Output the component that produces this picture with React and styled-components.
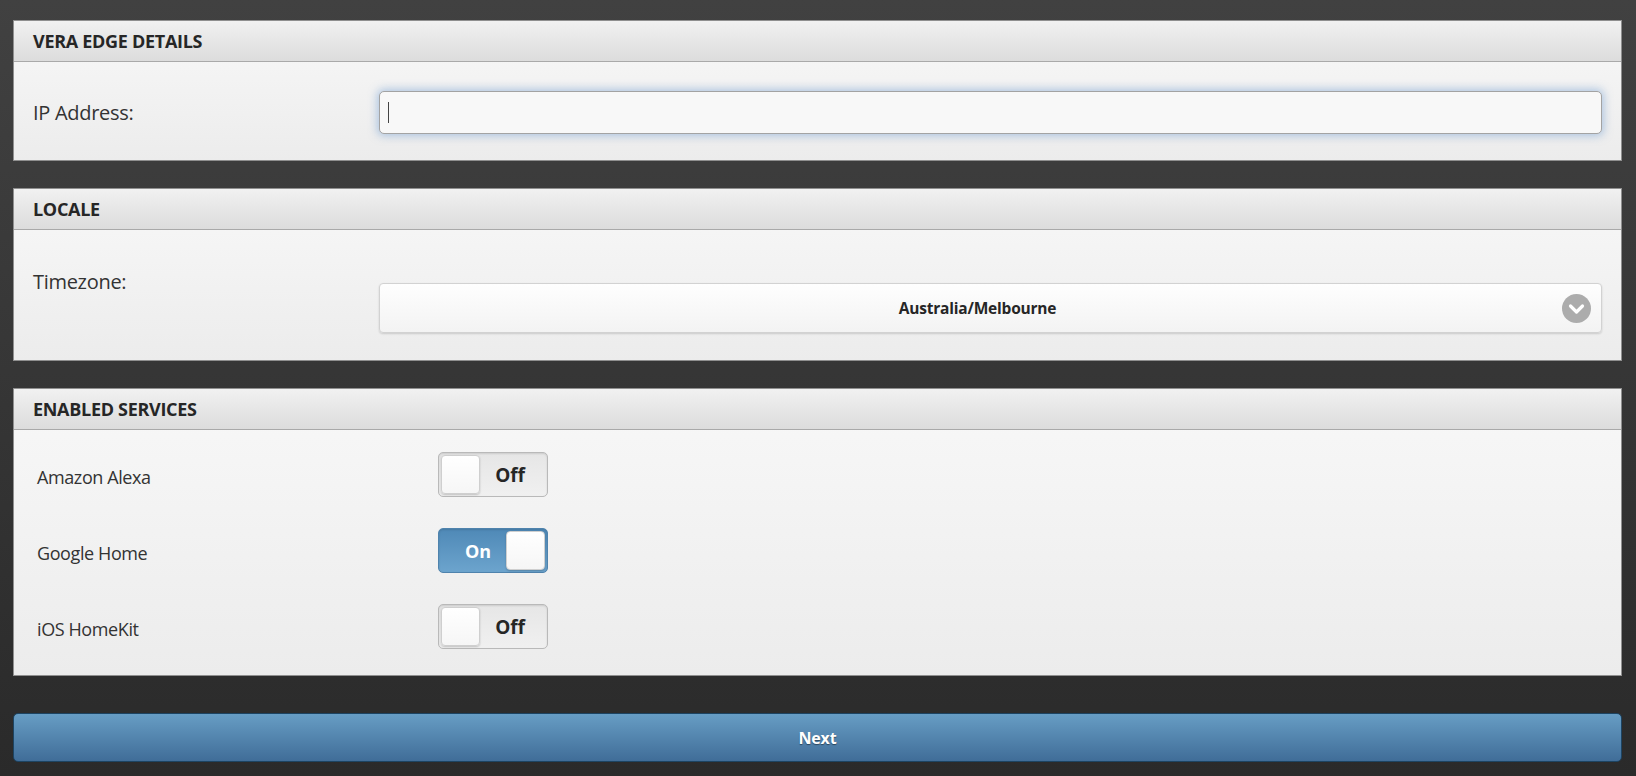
import React from "react";
import styled, { createGlobalStyle } from "styled-components";

const GlobalStyle = createGlobalStyle`
  html, body { margin: 0; padding: 0; }
  body { font-family: "Open Sans", "Liberation Sans", sans-serif; }
  * { box-sizing: border-box; }
`;

const Page = styled.div`
  min-height: 776px;
  background: linear-gradient(#414141, #2a2a2a);
  padding: 20px 14px 14px 13px;
  display: flex;
  flex-direction: column;
`;

const Panel = styled.section`
  border: 1px solid #8f8f8f;
  background: linear-gradient(#f8f8f8, #ececec);
  margin-bottom: ${(p) => p.$gap || 27}px;
`;

const PanelHeader = styled.h2`
  margin: 0;
  height: 41px;
  padding: 0 19px;
  display: flex;
  align-items: center;
  background: linear-gradient(#f1f1f1, #dcdcdc);
  border-bottom: 1px solid #a9a9a9;
  font-size: 18px;
  font-weight: 700;
  letter-spacing: -0.3px;
  color: #262626;
`;

const PanelBody = styled.div`
  height: ${(p) => p.$height}px;
  padding: ${(p) => p.$pad};
`;

const FieldRow = styled.div`
  display: grid;
  grid-template-columns: 346px 1fr;
  align-items: ${(p) => p.$align || "center"};
`;

const FieldLabel = styled.label`
  font-size: 20px;
  line-height: 28px;
  color: #333;
  letter-spacing: -0.3px;
  padding-top: ${(p) => p.$offset || 0}px;
`;

const InputWrap = styled.div`
  position: relative;
`;

const TextInput = styled.input`
  width: 100%;
  height: 43px;
  border: 1px solid #a3a3a3;
  border-radius: 5px;
  background: #f8f8f8;
  box-shadow: 0 0 8px 2px rgba(110, 155, 210, 0.5);
  padding: 0 10px;
  font-size: 18px;
  font-family: inherit;
  outline: none;
`;

const Caret = styled.span`
  position: absolute;
  left: 9px;
  top: 11px;
  width: 1px;
  height: 21px;
  background: #444;
`;

const SelectBox = styled.div`
  position: relative;
  margin-top: ${(p) => p.$offset || 0}px;
  height: 50px;
  border: 1px solid #d2d2d2;
  border-radius: 4px;
  background: linear-gradient(#fefefe, #f3f3f3);
  box-shadow: 0 1px 2px rgba(0, 0, 0, 0.15);
  display: flex;
  align-items: center;
  justify-content: center;
  padding-right: 26px;
  font-size: 15.5px;
  font-weight: 700;
  letter-spacing: -0.2px;
  color: #262626;
`;

const ChevronIcon = styled.svg`
  position: absolute;
  right: 10px;
  top: 10px;
`;

const ServiceRow = styled.div`
  display: grid;
  grid-template-columns: 401px 110px;
  align-items: center;
  margin-bottom: ${(p) => (p.$last ? 0 : 31)}px;
`;

const ServiceLabel = styled.span`
  font-size: 18px;
  color: #333;
  letter-spacing: -0.4px;
  padding-top: 4px;
`;

const Toggle = styled.div`
  position: relative;
  width: 110px;
  height: 45px;
  border-radius: 5px;
  border: 1px solid ${(p) => (p.$on ? "#4f83ad" : "#b9b9b9")};
  background: ${(p) =>
    p.$on ? "linear-gradient(#4f89b7, #6ca4cd)" : "linear-gradient(#e6e6e6, #f0f0f0)"};
  box-shadow: inset 0 1px 2px rgba(0, 0, 0, 0.12);
  display: flex;
  align-items: center;
  justify-content: ${(p) => (p.$on ? "flex-start" : "flex-end")};
  padding: 0 ${(p) => (p.$on ? "0 0 26px" : "22px 0 0")};
  font-size: ${(p) => (p.$on ? 18 : 19)}px;
  font-weight: 700;
  color: ${(p) => (p.$on ? "#fff" : "#262626")};
`;

const Knob = styled.span`
  position: absolute;
  top: 2px;
  ${(p) => (p.$on ? "right: 2px;" : "left: 2px;")}
  width: 39px;
  height: 39px;
  border-radius: 4px;
  background: linear-gradient(#ffffff, #f6f6f6);
  border: 1px solid #cfcfcf;
  box-shadow: 0 1px 2px rgba(0, 0, 0, 0.2);
`;

const NextButton = styled.button`
  height: 49px;
  width: 100%;
  border: 1px solid #1d4462;
  border-radius: 5px;
  background: linear-gradient(#679dc4, #406d98);
  color: #fff;
  font-family: inherit;
  font-size: 16px;
  font-weight: 700;
  letter-spacing: -0.2px;
  text-shadow: 0 1px 1px rgba(0, 0, 0, 0.45);
  cursor: pointer;
`;

const services = [
  { name: "Amazon Alexa", on: false },
  { name: "Google Home", on: true },
  { name: "iOS HomeKit", on: false },
];

export default function App() {
  return (
    <>
      <GlobalStyle />
      <Page>
        <Panel>
          <PanelHeader>VERA EDGE DETAILS</PanelHeader>
          <PanelBody $height={98} $pad="29px 19px 0 19px">
            <FieldRow>
              <FieldLabel>IP Address:</FieldLabel>
              <InputWrap>
                <TextInput type="text" aria-label="IP Address" />
                <Caret />
              </InputWrap>
            </FieldRow>
          </PanelBody>
        </Panel>

        <Panel>
          <PanelHeader>LOCALE</PanelHeader>
          <PanelBody $height={130} $pad="0 19px">
            <FieldRow $align="start">
              <FieldLabel $offset={38}>Timezone:</FieldLabel>
              <SelectBox $offset={53}>
                Australia/Melbourne
                <ChevronIcon width="29" height="29" viewBox="0 0 29 29">
                  <circle cx="14.5" cy="14.5" r="14.5" fill="#acacac" />
                  <polyline
                    points="8.5,12 14.5,18 20.5,12"
                    fill="none"
                    stroke="#fff"
                    strokeWidth="3.2"
                    strokeLinecap="round"
                    strokeLinejoin="round"
                  />
                </ChevronIcon>
              </SelectBox>
            </FieldRow>
          </PanelBody>
        </Panel>

        <Panel $gap={37}>
          <PanelHeader>ENABLED SERVICES</PanelHeader>
          <PanelBody $height={245} $pad="22px 23px 0 23px">
            {services.map((s, i) => (
              <ServiceRow key={s.name} $last={i === services.length - 1}>
                <ServiceLabel>{s.name}</ServiceLabel>
                <Toggle $on={s.on}>
                  {s.on ? "On" : "Off"}
                  <Knob $on={s.on} />
                </Toggle>
              </ServiceRow>
            ))}
          </PanelBody>
        </Panel>

        <NextButton>Next</NextButton>
      </Page>
    </>
  );
}
